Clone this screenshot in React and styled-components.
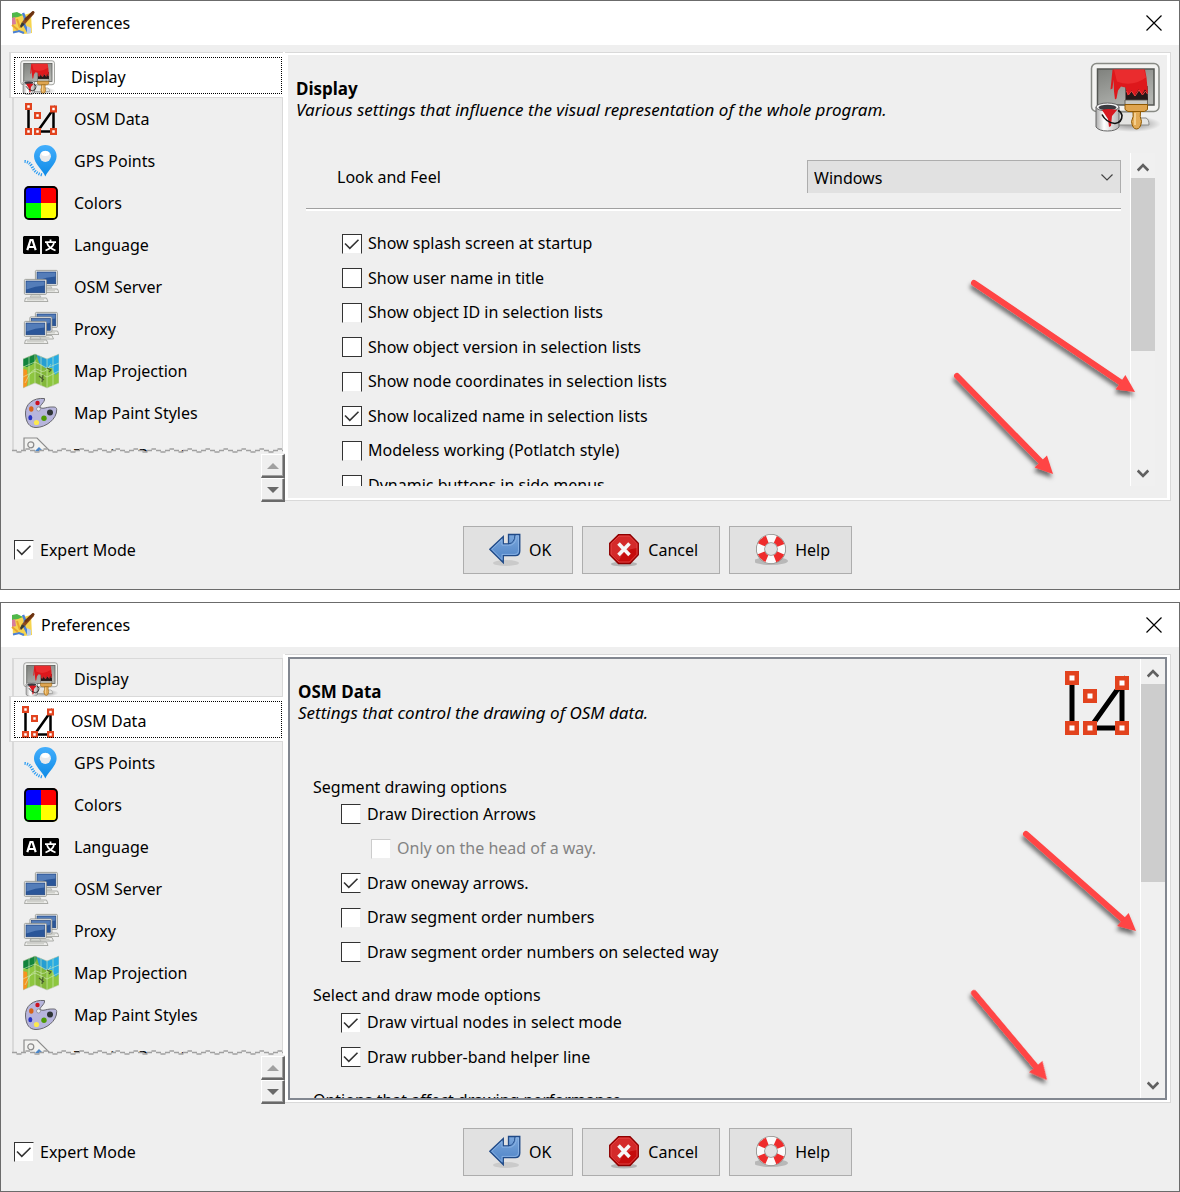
import React, { useState } from 'react';
import styled, { createGlobalStyle, css } from 'styled-components';

const GlobalStyle = createGlobalStyle`
  body {
    margin: 0;
    background-color: #fff;
    color: #000;
    font-family: 'Noto Sans', 'Open Sans', sans-serif;
    font-size: 16px;
    line-height: 21px;
  }
`;

const CHECK =
  "url(\"data:image/svg+xml,%3Csvg xmlns='http://www.w3.org/2000/svg' viewBox='0 0 18 18'%3E%3Cpath d='M2 8.5l4.8 4.8L15.500 4.800' fill='none' stroke='%23333' stroke-width='1.600'/%3E%3C/svg%3E\")";

const Page = styled.main`
  display: flex;
  flex-direction: column;
  gap: 12px;
`;

const WindowDiv = styled.section`
  position: relative;
  display: flex;
  flex-direction: column;
  border: 1px solid #6b6b6b;
  background-color: #efefef;
`;

const TitleBar = styled.header`
  display: flex;
  align-items: center;
  height: 44px;
  padding: 0 16px 0 10px;
  background-color: #fff;
`;

const TitleText = styled.h1`
  flex: 1;
  margin: 1px 0 0 5px;
  font-size: 16px;
  font-weight: normal;
`;

const CloseButton = styled.button`
  display: flex;
  padding: 0;
  border: none;
  background: none;
`;

const Body = styled.div`
  display: flex;
  height: 450px;
  padding: 7px 8px 0;
`;

const Sidebar = styled.div`
  display: flex;
  flex-direction: column;
  flex: none;
  width: 276px;
`;

const TabList = styled.div`
  position: relative;
  box-sizing: border-box;
  height: 401px;
  padding: 4px 0 0 3px;
  border-right: 2px solid #fff;
  overflow: hidden;
`;

const Tab = styled.button`
  position: relative;
  display: flex;
  align-items: center;
  gap: 15px;
  box-sizing: border-box;
  width: 100%;
  height: 42px;
  padding: 0 0 0 9px;
  border: 0 solid #d9d9d9;
  border-left-width: 2px;
  border-right-width: 1px;
  background: none;
  color: inherit;
  font: inherit;
  text-align: left;

  &:first-child {
    border-top-width: 1px;
  }

  ${props =>
    props.$selected &&
    css`
      width: auto;
      min-width: calc(100% + 3px);
      height: 46px;
      margin: -4px 0 0 -3px;
      padding-top: 5px;
      border-width: 1px 0 1px 2px;
      background-color: #fff;

      &::before {
        content: '';
        position: absolute;
        inset: 4px 1px 3px 3px;
        border: 1px dotted #000;
      }
    `}
`;

const TornEdge = styled.svg`
  position: absolute;
  left: 3px;
  bottom: 0;
  width: 100%;
  height: 5px;
`;

const TabScroll = styled.div`
  display: flex;
  flex-direction: column;
  align-self: flex-end;
  margin-top: 1px;
`;

const TabScrollButton = styled.button`
  display: flex;
  align-items: center;
  justify-content: center;
  box-sizing: border-box;
  width: 24px;
  height: 24px;
  padding: 0;
  border: 1px solid #fff;
  border-right: 2px solid #696969;
  border-bottom: 2px solid #696969;
  box-shadow: inset -1px -1px 0 #a0a0a0;
  background-color: #efefef;
`;

const Panel = styled.div`
  display: flex;
  flex: 1;
  min-width: 0;
  box-sizing: border-box;
  margin-bottom: 1px;
  padding: 2px 3px 2px;
  border: 1px solid #d9d9d9;
  border-left: none;
  background-color: #fff;
`;

const PanelInner = styled.div`
  display: flex;
  flex: 1;
  min-width: 0;
  box-sizing: border-box;
  background-color: #efefef;

  ${props =>
    props.$framed
      ? css`
          border: 2px solid #828790;
        `
      : css`
          flex-direction: column;
          padding-bottom: 12px;
        `}
`;

const PanelHead = styled.div`
  display: flex;
  justify-content: space-between;
  padding: ${props => (props.$large ? '7px 5px 19px 8px' : '12px 11px 42px 8px')};
`;

const PanelTitle = styled.h2`
  margin: ${props => (props.$large ? '16px' : '10px')} 0 0;
  font-size: 17px;
  line-height: 21px;
`;

const PanelNote = styled.p`
  margin: 0;
  font-size: 17px;
  font-style: italic;
`;

const ScrollArea = styled.div`
  display: flex;
  flex: 1;
  min-height: 0;
  margin: ${props => (props.$inset ? '0 12px 0 18px' : '0')};
`;

const Viewport = styled.div`
  flex: 1;
  min-width: 0;
  padding-right: ${props => (props.$inset ? '9px' : '0')};
  overflow: hidden;
`;

const ScrollBarDiv = styled.div`
  display: flex;
  flex-direction: column;
  flex: none;
  width: 24px;
  border-left: 1px solid #fff;
  background-color: #f0f0f0;
`;

const ScrollButton = styled.button`
  display: flex;
  align-items: center;
  justify-content: center;
  height: 25px;
  padding: ${props => (props.$up ? '4px 0 0' : '0')};
  border: none;
  background: none;
`;

const Track = styled.div`
  flex: 1;
`;

const Thumb = styled.div`
  height: ${props => props.$size}px;
  background-color: #cdcdcd;
`;

const FieldRow = styled.div`
  display: flex;
  align-items: center;
  justify-content: space-between;
  margin-top: 7px;
  padding-left: 31px;
`;

const FieldLabel = styled.label`
  padding-top: 2px;
`;

const SelectWrap = styled.div`
  position: relative;
  width: 314px;

  svg {
    position: absolute;
    top: 13px;
    right: 8px;
    pointer-events: none;
  }
`;

const Select = styled.select`
  appearance: none;
  width: 100%;
  height: 33px;
  padding: 2px 6px 0;
  border: 1px solid #adadad;
  border-bottom: none;
  border-radius: 0;
  background-color: #e1e1e1;
  color: inherit;
  font: inherit;
`;

const Rule = styled.hr`
  height: 2px;
  margin: 15px 0;
  border: none;
  border-top: 1px solid #a0a0a0;
  background-color: #fff;
`;

const OptionList = styled.div`
  padding-left: 36px;
`;

const Group = styled.fieldset`
  margin: 0 0 16px;
  padding: 0 0 0 51px;
  border: none;
`;

const GroupTitle = styled.legend`
  height: 20px;
  margin-left: -28px;
  padding: 0;
  line-height: 20px;
`;

const OptionLabel = styled.label`
  display: flex;
  align-items: center;
  gap: 6px;
  height: ${props => (props.$tall ? 35 : 34)}px;
  margin-left: ${props => (props.$nested ? 30 : 0)}px;
  color: ${props => (props.$disabled ? '#838383' : 'inherit')};
  white-space: nowrap;
`;

const Checkbox = styled.input`
  appearance: none;
  flex: none;
  box-sizing: border-box;
  width: 20px;
  height: 20px;
  margin: 0;
  border: 1px solid #333;
  background: #fff;

  ${props =>
    props.$openRight &&
    css`
      border-right-color: #efefef;
      background-clip: padding-box;
    `}
  ${props =>
    props.$openBottom &&
    css`
      border-bottom-color: #efefef;
      background-clip: padding-box;
    `}

  &:checked {
    background-image: ${CHECK};
  }

  &:disabled {
    border-top-color: #ccc;
    border-left-color: #ccc;
  }
`;

const Footer = styled.footer`
  display: flex;
  align-items: center;
  padding: 24px 0 15px 13px;
`;

const ExpertLabel = styled.label`
  display: flex;
  align-items: center;
  flex: none;
  gap: 6px;
  width: 122px;
`;

const Buttons = styled.div`
  display: flex;
  flex: 1;
  justify-content: center;
  gap: 9px;
`;

const Button = styled.button`
  display: flex;
  align-items: center;
  gap: 6px;
  box-sizing: border-box;
  height: 48px;
  padding: 0 21px 0 25px;
  border: 1px solid #adadad;
  background-color: #e1e1e1;
  color: inherit;
  font: inherit;
`;

const Pointers = styled.svg`
  position: absolute;
  top: -1px;
  right: -1px;
  pointer-events: none;
`;

/* Icons */

const AppIcon = () => (
  <svg width="25" height="24" viewBox="0 0 25 24">
    <path d="M1 3l6-1 5 2 8-2 1 20-8 1-5-2-6 1z" fill="#f6d44e" />
    <path d="M1 2l5-1 6 3-5 2-6 1z" fill="#4fb84a" />
    <path d="M1 7l3-1 1 7-4 1z" fill="#d77c9c" />
    <path d="M12 2l2 5-1 6 4 8" fill="none" stroke="#4a80d8" strokeWidth="2.500" />
    <path d="M2 21.500l6-1.500 5 2" fill="none" stroke="#4a80d8" strokeWidth="2" />
    <path d="M1 14l6 5M6 8l3 9" stroke="#e9a52f" strokeWidth="2" />
    <path d="M16 15l4 2v5l-4 1z" fill="#b9cff0" />
    <path d="M9 15l2-4 3 2-4 4z" fill="#3a3a30" />
    <path d="M11 11l10-10 2 2-9 10z" fill="#8c4a1c" />
    <path d="M15 8l7-6.500" stroke="#6b3210" strokeWidth="3" strokeLinecap="round" />
  </svg>
);

const DisplayIcon = ({ size }) => (
  <svg width={size} height={size} viewBox="0 0 72 72">
    <defs>
      <linearGradient id="screen" x1="0" y1="0" x2="0.6" y2="1">
        <stop offset="0" stopColor="#7f817d" />
        <stop offset="1" stopColor="#b2b4b0" />
      </linearGradient>
      <linearGradient id="bucket">
        <stop offset="0" stopColor="#aaa" />
        <stop offset="0.35" stopColor="#fff" />
        <stop offset="1" stopColor="#b5b5b5" />
      </linearGradient>
      <radialGradient id="ground">
        <stop offset="0.3" stopColor="#000" stopOpacity="0.3" />
        <stop offset="1" stopColor="#000" stopOpacity="0" />
      </radialGradient>
    </defs>
    <ellipse cx="42" cy="62" rx="29" ry="8" fill="url(#ground)" />
    <path d="M28 50h20l2 6h6q3 1 3 7H28z" fill="#e4e4e2" stroke="#8a8a88" />
    <rect x="1.500" y="1.500" width="67.500" height="48" rx="5" fill="#f3f3f1" stroke="#888a85" strokeWidth="1.500" />
    <rect x="7.500" y="7" width="56.500" height="36" fill="url(#screen)" stroke="#555753" strokeWidth="1.500" />
    <path d="M35.500 24h22l.500 14H35.500z" fill="#241818" />
    <path
      d="M22.500 7.500H55l1.500 8 1.500 16-3-4-3 5-3.500-5-4 6-3-5-4 5-2-8-4.500-1-3 4-1.500 8-1.500 1-1-8-.500-12-1 9-2 1z"
      fill="#de181c"
    />
    <path d="M24 7.500h30l2 8q-14 10-29 4z" fill="#f23a3a" opacity="0.600" />
    <path d="M36.500 29l2 4 3-4 3.500 5 4-6 3.500 5 3-4 2 3" fill="none" stroke="#f34040" strokeWidth="1" />
    <path d="M35 38h22.500v4.500H35z" fill="#c9c9c4" stroke="#55524a" strokeWidth="0.800" />
    <path d="M35 42.500h22.500v5l-3 2h-16.500l-3-2z" fill="#dfa550" stroke="#8f5902" />
    <path d="M43 49.500h7.500q-1 5 1 10-1 7.500-5 7.500t-5-7.500q2.500-5 1.500-10z" fill="#e2aa55" stroke="#8f5902" />
    <path d="M45 51v12" stroke="#f4cf8e" strokeWidth="2" />
    <path d="M6 45v20q3 4 11.500 4t11.500-4V45z" fill="url(#bucket)" stroke="#666" />
    <ellipse cx="17.500" cy="45" rx="11.500" ry="4" fill="#f4f4f4" stroke="#666" />
    <ellipse cx="17.500" cy="45.500" rx="9" ry="2.800" fill="#3b3b40" />
    <path d="M12 48q6-2 15 0l-5 6-1 10-2 1-1-8z" fill="#d81820" />
    <path d="M12 52.500q4 8 13 9 7-1 7-8-1-4-4-5" fill="none" stroke="#111" strokeWidth="1.600" />
  </svg>
);

const NODES = [[0, 0], [50, 5], [18, 18], [0, 50], [18, 50], [50, 50]];

const OsmDataIcon = ({ size, viewBox = '-4 -4 72 72' }) => (
  <svg width={size} height={size} viewBox={viewBox}>
    <path d="M7 7v50M25 57h32V12z" fill="none" stroke="#000" strokeWidth="5" />
    {NODES.map(([x, y]) => (
      <g key={`${x}-${y}`}>
        <rect x={x} y={y} width="14" height="14" fill="#e2431e" />
        <rect x={x + 4.5} y={y + 4.5} width="5" height="5" fill="#fff" />
      </g>
    ))}
  </svg>
);

const GpsIcon = ({ size }) => (
  <svg width={size} height={size} viewBox="0 0 36 36">
    <defs>
      <linearGradient id="pin" x1="0" y1="0" x2="0" y2="1">
        <stop offset="0" stopColor="#43aefc" />
        <stop offset="1" stopColor="#0d8ae6" />
      </linearGradient>
    </defs>
    <path d="M1.500 18.500q5 0 8 6t10 7.500" fill="none" stroke="#2a9bf2" strokeWidth="3" strokeDasharray="1.200 1.200" />
    <path d="M22.300 33.500C20 27 11 21 11 13.300a11.300 11.300 0 0 1 22.600 0C33.600 21 25 27 22.300 33.500z" fill="url(#pin)" />
    <circle cx="22.300" cy="13.300" r="5.600" fill="#e9eaec" />
    <ellipse cx="22.300" cy="10.500" rx="4" ry="2.500" fill="#fff" />
  </svg>
);

const ColorsIcon = ({ size }) => (
  <svg width={size} height={size} viewBox="0 0 36 36">
    <clipPath id="tile">
      <rect x="1.500" y="1.500" width="33" height="33" rx="4" />
    </clipPath>
    <g clipPath="url(#tile)">
      <path d="M1 1h17v17H1z" fill="#00f" />
      <path d="M18 1h17v17H18z" fill="#f00" />
      <path d="M1 18h17v17H1z" fill="#0f0" />
      <path d="M18 18h17v17H18z" fill="#ff0" />
    </g>
    <rect x="2" y="2" width="32" height="32" rx="4" fill="none" stroke="#000" strokeWidth="1.800" />
  </svg>
);

const LanguageIcon = ({ size }) => (
  <svg width={size} height={size} viewBox="0 0 36 36">
    <path d="M1 9h16v18H1L0 26V10zM19 9h16l1 1v16l-1 1H19z" fill="#000" />
    <path d="M4.300 23.200L7.500 13h2L12.700 23.200M5.500 20h6" fill="none" stroke="#fff" strokeWidth="2.200" />
    <path d="M22 15.200h11M27.500 12.500v3M24 16q1.500 5 8.500 7.500M31 16q-1.500 5-8.500 7.500" fill="none" stroke="#fff" strokeWidth="1.800" />
  </svg>
);

const Computer = ({ x, y }) => (
  <g transform={`translate(${x} ${y})`}>
    <path d="M8 15h7l2 3H6z" fill="#d5d7d2" stroke="#a5a7a2" strokeWidth="0.600" />
    <path d="M1.500 19h21l1.500 3.500H.500z" fill="#eeeeec" stroke="#9a9c97" strokeWidth="0.800" />
    <path d="M3 20.800h17" stroke="#c3c5bf" />
    <rect x="0.400" y="0.400" width="22" height="15" rx="1" fill="#eeeeec" stroke="#8c8e89" strokeWidth="0.800" />
    <rect x="2" y="2" width="18.800" height="11.800" fill="#2a5699" stroke="#1d3f78" strokeWidth="0.600" />
    <path d="M2.400 2.400h18v4q-9 .500-18 4z" fill="#5f87c0" opacity="0.800" />
  </g>
);

const ServerIcon = ({ size }) => (
  <svg width={size} height={size} viewBox="0 0 36 36">
    <Computer x={12} y={1} />
    <Computer x={1} y={10} />
  </svg>
);

const ProxyIcon = ({ size }) => (
  <svg width={size} height={size} viewBox="0 0 36 36">
    <Computer x={12} y={1} />
    <Computer x={6.500} y={5.500} />
    <Computer x={1} y={10} />
  </svg>
);

const MapIcon = ({ size }) => (
  <svg width={size} height={size} viewBox="0 0 36 36">
    <clipPath id="sheet">
      <path d="M0 6l12-5 12 5 12-5v29l-12 5-12-5-12 5z" />
    </clipPath>
    <g clipPath="url(#sheet)">
      <path d="M0 0h36v36H0z" fill="#8dc63f" />
      <path d="M0 0h14l-1 6-3 5-6 3-4-1z" fill="#12843c" />
      <path d="M13 0h23v19l-4 3-3-7-7 0-6-5z" fill="#29abe2" />
      <path d="M0 16l4 1 1 10-2 9H0z" fill="#f7931e" />
      <path d="M12 0v36l12 2V0z" fill="#000" opacity="0.070" />
      <path
        d="M0 14l12-5 12 6 12-5M0 24l12-6 12 6 12-6M6 2v32M18 2v32M30 2v32M12 0v36M24 0v36M2 30q8-18 14-13t12-6"
        fill="none"
        stroke="#d5edc0"
        strokeWidth="0.600"
      />
      <path d="M16 23l5 4M20 22l-1 7M24 15l4 2-2 2" fill="none" stroke="#4a5f2f" strokeWidth="1.200" />
    </g>
    <path d="M0 6l12-5 12 5 12-5v29l-12 5-12-5-12 5z" fill="none" stroke="#c7ccc0" strokeWidth="0.600" />
  </svg>
);

const PaletteIcon = ({ size }) => (
  <svg width={size} height={size} viewBox="0 0 36 36">
    <path
      d="M21.500 3.500C10 2.500 2 9 2.500 19c.500 9 4 13.500 10.500 13.500C23 32.500 34 24 33.700 14.500c-.200-3-3-2.500-6.200-2.500-4 .200-7 2-9.500 1-3.500-1.500 4.500-5.500 3.500-9.500z"
      fill="#b7b5dc"
      stroke="#66666c"
      strokeWidth="1"
    />
    <circle cx="15.500" cy="14" r="2" fill="#efefef" stroke="#77777c" strokeWidth="0.600" />
    <circle cx="14.500" cy="8" r="2.200" fill="#cc1020" />
    <ellipse cx="8.300" cy="14" rx="2.200" ry="2.700" fill="#d7641a" />
    <ellipse cx="7.300" cy="22.700" rx="2" ry="2.600" fill="#2733c2" />
    <circle cx="13.500" cy="27.500" r="2.600" fill="#fce94f" />
    <circle cx="21" cy="23.300" r="2.700" fill="#4e9a06" />
    <circle cx="27" cy="17.500" r="3" fill="#2e3436" />
  </svg>
);

const TagIcon = ({ size }) => (
  <svg width={size} height={size} viewBox="0 0 36 36">
    <path d="M1 1h13l20 20-13 13L1 14z" fill="#f2f2f0" stroke="#8b8b8b" strokeWidth="1.200" />
    <circle cx="7.800" cy="7.800" r="3" fill="none" stroke="#8b8b8b" strokeWidth="1.200" />
    <path d="M12 14l4-4 5 5z" fill="#4b86c8" />
  </svg>
);

const OkIcon = () => (
  <svg width="34" height="34" viewBox="0 0 34 34">
    <defs>
      <linearGradient id="ok" x1="0" y1="0" x2="0" y2="1">
        <stop offset="0" stopColor="#7ba7dc" />
        <stop offset="1" stopColor="#4a80c4" />
      </linearGradient>
    </defs>
    <ellipse cx="17" cy="30" rx="13" ry="3" fill="#000" opacity="0.100" />
    <path
      d="M.800 16.300L14.300 3.500v7.300h5.200V1.500h11.300v16.500q0 4.700-4.500 4.700H14.300v7z"
      fill="url(#ok)"
      stroke="#204a87"
      strokeWidth="1.300"
    />
    <path d="M19.500 10.800q6.500-.500 6.500-9.300" fill="none" stroke="#204a87" strokeWidth="1" />
    <path d="M2.800 16.300L13 6.500v5.600h9q4-1 5.200-6V2.800h2.300v15q0 3.600-3.500 3.600H13v5.200z" fill="none" stroke="#8fb6e6" strokeWidth="0.800" />
  </svg>
);

const CancelIcon = () => (
  <svg width="34" height="34" viewBox="0 0 34 34">
    <ellipse cx="16" cy="31" rx="13" ry="2.500" fill="#000" opacity="0.200" />
    <path d="M10.500 1.700h11.500l8.300 8.500v11.600L22 30.500H10.500L1.700 21.800V10.200z" fill="#c60c0c" stroke="#8d0000" strokeWidth="1.300" />
    <path d="M11 3h10.500l7.500 7.700v4.300q-14 1-18 12.500L3 21.300V10.700z" fill="#e45050" opacity="0.450" />
    <path d="M11 3h10.500l7.500 7.700v10.600L21.500 29H11L3 21.300V10.700z" fill="none" stroke="#e75a5a" strokeWidth="0.700" />
    <path d="M10.500 10.500l11 11.500M21.500 10.500l-11 11.500" stroke="#f6f6f6" strokeWidth="3.600" />
  </svg>
);

const HelpIcon = () => (
  <svg width="34" height="34" viewBox="0 0 34 34">
    <ellipse cx="16" cy="28" rx="17" ry="4" fill="#000" opacity="0.180" />
    <circle cx="16" cy="16" r="10.500" fill="none" stroke="#8a8a86" strokeWidth="9" />
    <circle cx="16" cy="16" r="10.500" fill="none" stroke="#fafafa" strokeWidth="7.400" />
    <circle
      cx="16"
      cy="16"
      r="10.500"
      fill="none"
      stroke="#ee2c2c"
      strokeWidth="7.400"
      strokeDasharray="8.247 8.247"
      strokeDashoffset="-4.123"
    />
  </svg>
);

const Chevron = ({ up }) => (
  <svg width="12" height="9" viewBox="0 0 12 9">
    <path d={up ? 'M.700 7.500L6 2l5.300 5.500' : 'M.700 1.500L6 7l5.300-5.500'} fill="none" stroke="#606060" strokeWidth="2.600" />
  </svg>
);

const TABS = [
  { name: 'Display', Icon: DisplayIcon },
  { name: 'OSM Data', Icon: OsmDataIcon },
  { name: 'GPS Points', Icon: GpsIcon },
  { name: 'Colors', Icon: ColorsIcon },
  { name: 'Language', Icon: LanguageIcon },
  { name: 'OSM Server', Icon: ServerIcon },
  { name: 'Proxy', Icon: ProxyIcon },
  { name: 'Map Projection', Icon: MapIcon },
  { name: 'Map Paint Styles', Icon: PaletteIcon },
  { name: 'Tagging Presets', Icon: TagIcon },
];

const DISPLAY_OPTIONS = [
  { text: 'Show splash screen at startup', checked: true, tall: true },
  { text: 'Show user name in title' },
  { text: 'Show object ID in selection lists', tall: true },
  { text: 'Show object version in selection lists' },
  { text: 'Show node coordinates in selection lists', tall: true },
  { text: 'Show localized name in selection lists', checked: true },
  { text: 'Modeless working (Potlatch style)', tall: true },
  { text: 'Dynamic buttons in side menus' },
];

const SEGMENT_OPTIONS = [
  { text: 'Draw Direction Arrows' },
  { text: 'Only on the head of a way.', nested: true, disabled: true, tall: true },
  { text: 'Draw oneway arrows.', checked: true },
  { text: 'Draw segment order numbers', tall: true },
  { text: 'Draw segment order numbers on selected way' },
];

const SELECT_OPTIONS = [
  { text: 'Draw virtual nodes in select mode', checked: true, tall: true },
  { text: 'Draw rubber-band helper line', checked: true },
];

const Option = ({ option, openRight }) => {
  const [checked, setChecked] = useState(Boolean(option.checked));

  return (
    <OptionLabel $tall={option.tall} $nested={option.nested} $disabled={option.disabled}>
      <Checkbox
        type="checkbox"
        checked={checked}
        onChange={event => setChecked(event.target.checked)}
        disabled={option.disabled}
        $openBottom={option.tall}
        $openRight={openRight}
      />
      {option.text}
    </OptionLabel>
  );
};

const ScrollBar = ({ size }) => (
  <ScrollBarDiv>
    <ScrollButton $up aria-label="Scroll up">
      <Chevron up />
    </ScrollButton>
    <Track>
      <Thumb $size={size} />
    </Track>
    <ScrollButton aria-label="Scroll down">
      <Chevron />
    </ScrollButton>
  </ScrollBarDiv>
);

const DisplayPanel = () => (
  <PanelInner>
    <PanelHead $large>
      <div>
        <PanelTitle $large>Display</PanelTitle>
        <PanelNote>Various settings that influence the visual representation of the whole program.</PanelNote>
      </div>
      <DisplayIcon size={72} />
    </PanelHead>
    <ScrollArea $inset>
      <Viewport $inset>
        <FieldRow>
          <FieldLabel htmlFor="laf">Look and Feel</FieldLabel>
          <SelectWrap>
            <Select id="laf" defaultValue="Windows">
              <option>Windows</option>
              <option>Metal</option>
            </Select>
            <svg width="12" height="9" viewBox="0 0 12 9">
              <path d="M.500 1.500L6 7l5.500-5.500" fill="none" stroke="#444" strokeWidth="1.200" />
            </svg>
          </SelectWrap>
        </FieldRow>
        <Rule />
        <OptionList>
          {DISPLAY_OPTIONS.map(option => (
            <Option key={option.text} option={option} />
          ))}
        </OptionList>
      </Viewport>
      <ScrollBar size={173} />
    </ScrollArea>
  </PanelInner>
);

const OsmDataPanel = () => (
  <PanelInner $framed>
    <ScrollArea>
      <Viewport>
        <PanelHead>
          <div>
            <PanelTitle>OSM Data</PanelTitle>
            <PanelNote>Settings that control the drawing of OSM data.</PanelNote>
          </div>
          <OsmDataIcon size={64} viewBox="0 0 64 64" />
        </PanelHead>
        <Group>
          <GroupTitle>Segment drawing options</GroupTitle>
          {SEGMENT_OPTIONS.map(option => (
            <Option key={option.text} option={option} openRight />
          ))}
        </Group>
        <Group>
          <GroupTitle>Select and draw mode options</GroupTitle>
          {SELECT_OPTIONS.map(option => (
            <Option key={option.text} option={option} openRight />
          ))}
        </Group>
        <Group>
          <GroupTitle>Options that affect drawing performance</GroupTitle>
        </Group>
      </Viewport>
      <ScrollBar size={198} />
    </ScrollArea>
  </PanelInner>
);

// x1, y1 is the round end, x2, y2 the tip
const Pointer = ({ x1, y1, x2, y2 }) => {
  const angle = Math.atan2(y2 - y1, x2 - x1);
  const length = Math.hypot(x2 - x1, y2 - y1);

  return (
    <g transform={`translate(${x1} ${y1}) rotate(${(angle * 180) / Math.PI})`} fill="#ff4444">
      <path d={`M0 0H${length - 14}`} stroke="#ff4444" strokeWidth="6" strokeLinecap="round" />
      <path d={`M${length} 0l-17.500-8.700v17.400z`} />
    </g>
  );
};

const PreferencesWindow = ({ initialTab, pointers }) => {
  const [tab, setTab] = useState(initialTab);
  const [expert, setExpert] = useState(true);

  return (
    <WindowDiv>
      <TitleBar>
        <AppIcon />
        <TitleText>Preferences</TitleText>
        <CloseButton aria-label="Close">
          <svg width="18" height="18" viewBox="0 0 18 18">
            <path d="M1.500 1.500l15 15M16.500 1.500l-15 15" stroke="#000" strokeWidth="1.200" />
          </svg>
        </CloseButton>
      </TitleBar>
      <Body>
        <Sidebar>
          <TabList role="tablist" aria-orientation="vertical">
            {TABS.map(({ name, Icon }) => (
              <Tab key={name} role="tab" aria-selected={tab === name} $selected={tab === name} onClick={() => setTab(name)}>
                <Icon size={36} />
                {name}
              </Tab>
            ))}
            <TornEdge>
              <defs>
                <pattern id="torn" width="18" height="5" patternUnits="userSpaceOnUse">
                  <path d="M0 2h4.500v1.500H9V2h4.500V1H18v4H0z" fill="#efefef" />
                  <path d="M0 2.500h5M4.500 4h5M9 2.500h5M13.500 1H18" stroke="#a0a0a0" strokeWidth="1.500" />
                </pattern>
              </defs>
              <rect width="100%" height="5" fill="url(#torn)" />
            </TornEdge>
          </TabList>
          <TabScroll>
            <TabScrollButton aria-label="Previous tabs">
              <svg width="12" height="6" viewBox="0 0 12 6">
                <path d="M0 6l6-6 6 6z" fill="#a0a0a0" />
              </svg>
            </TabScrollButton>
            <TabScrollButton aria-label="Next tabs">
              <svg width="12" height="6" viewBox="0 0 12 6">
                <path d="M0 0l6 6 6-6z" fill="#696969" />
              </svg>
            </TabScrollButton>
          </TabScroll>
        </Sidebar>
        <Panel role="tabpanel">{tab === 'OSM Data' ? <OsmDataPanel /> : <DisplayPanel />}</Panel>
      </Body>
      <Footer>
        <ExpertLabel>
          <Checkbox
            type="checkbox"
            checked={expert}
            onChange={event => setExpert(event.target.checked)}
            $openRight
            $openBottom
          />
          Expert Mode
        </ExpertLabel>
        <Buttons>
          <Button>
            <OkIcon />
            OK
          </Button>
          <Button>
            <CancelIcon />
            Cancel
          </Button>
          <Button>
            <HelpIcon />
            Help
          </Button>
        </Buttons>
      </Footer>
      <Pointers width="240" height="590" viewBox="0 0 240 590">
        <defs>
          <filter id="drop" x="-20%" y="-20%" width="140%" height="140%">
            <feDropShadow dx="-1" dy="4" stdDeviation="2" floodColor="#000" floodOpacity="0.550" />
          </filter>
        </defs>
        <g filter="url(#drop)">
          {pointers.map(pointer => (
            <Pointer key={pointer.x1} {...pointer} />
          ))}
        </g>
      </Pointers>
    </WindowDiv>
  );
};

const App = () => (
  <Page>
    <GlobalStyle />
    <PreferencesWindow
      initialTab="Display"
      pointers={[
        { x1: 34, y1: 283, x2: 195, y2: 392 },
        { x1: 17, y1: 376, x2: 113, y2: 474 },
      ]}
    />
    <PreferencesWindow
      initialTab="OSM Data"
      pointers={[
        { x1: 86, y1: 232, x2: 196, y2: 329 },
        { x1: 34, y1: 391, x2: 107, y2: 478 },
      ]}
    />
  </Page>
);

export default App;
